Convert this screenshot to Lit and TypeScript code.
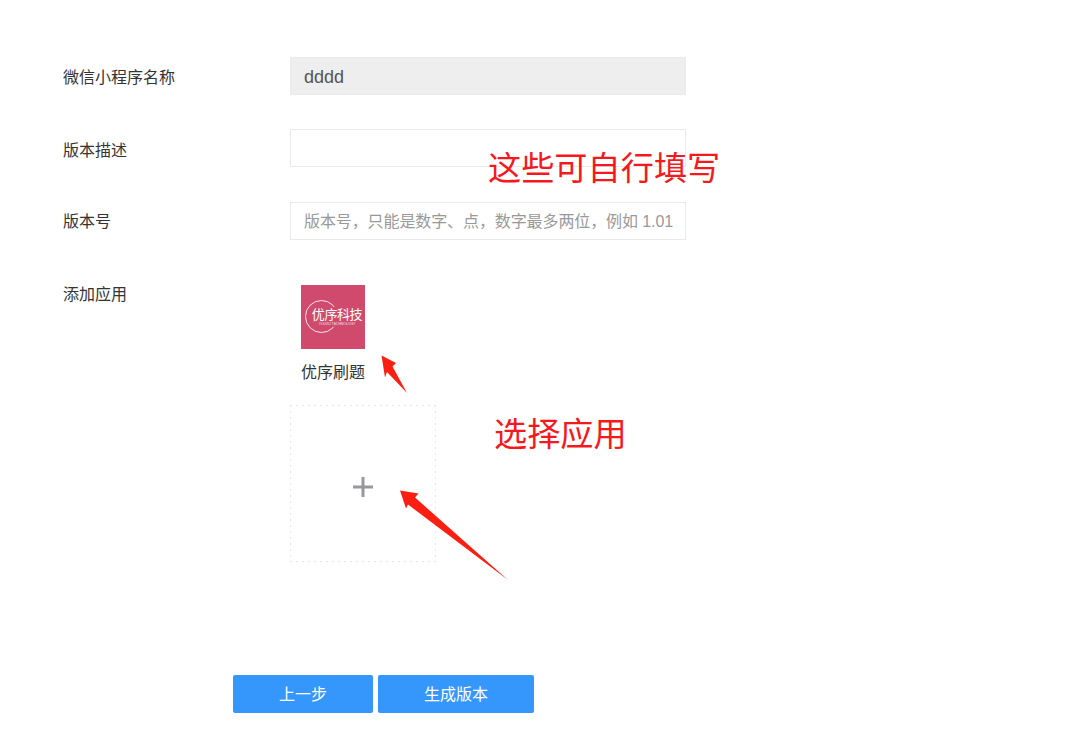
import { LitElement, html, css, svg } from "lit";
import { customElement } from "lit/decorators.js";

@customElement("app-root")
export class AppRoot extends LitElement {
  static styles = css`
    :host {
      display: block;
      position: relative;
      height: 731px;
      overflow: hidden;
      background: #fff;
      font-family: "Liberation Sans", "Noto Sans CJK SC", sans-serif;
      font-size: 16px;
      color: #333;
    }
    .form {
      display: flex;
      flex-direction: column;
      padding: 57px 0 0 63px;
    }
    .row {
      display: flex;
    }
    .row.r1 {
      margin-bottom: 34px;
    }
    .row.r2 {
      margin-bottom: 35px;
    }
    .row.r3 {
      margin-bottom: 36px;
    }
    .label {
      box-sizing: border-box;
      width: 227px;
      flex: none;
      line-height: 38px;
      height: 38px;
      color: #333;
    }
    .label.first {
      padding-top: 2px;
    }
    .label.low {
      padding-top: 3px;
    }
    .label.mid {
      padding-top: 1px;
    }
    .input {
      box-sizing: border-box;
      width: 396px;
      height: 38px;
      border: 1px solid #e9e9e9;
      padding: 2px 0 0 13px;
      font: inherit;
      color: #555;
      background: #fff;
      outline: none;
      border-radius: 0;
      margin: 0;
    }
    .input::placeholder {
      color: #999;
      opacity: 1;
      letter-spacing: -0.1px;
    }
    .input[disabled] {
      background: #eee;
      border-color: #eaeaea;
      -webkit-text-fill-color: #555;
      opacity: 1;
      font-size: 18px;
    }
    .apps {
      display: flex;
      flex-direction: column;
      width: 146px;
    }
    .app {
      display: flex;
      flex-direction: column;
      align-items: center;
      width: 86px;
      margin-top: 9px;
    }
    .logo {
      box-sizing: border-box;
      position: relative;
      width: 64px;
      height: 64px;
      padding-left: 8px;
      background: #cf4a6c;
      display: flex;
      flex-direction: column;
      align-items: center;
      justify-content: center;
      color: #fff;
    }
    .logo-ring {
      position: absolute;
      left: 4px;
      top: 15px;
      width: 33px;
      height: 33px;
      box-sizing: border-box;
      border: 1px solid rgba(255, 255, 255, 0.85);
      border-radius: 50%;
    }
    .logo-main {
      position: relative;
      background: #cf4a6c;
      font-size: 13px;
      font-weight: 400;
      line-height: 15px;
      white-space: nowrap;
      letter-spacing: -0.4px;
    }
    .logo-sub {
      position: relative;
      background: #cf4a6c;
      font-size: 3.4px;
      line-height: 5px;
      white-space: nowrap;
      opacity: 0.85;
    }
    .app-name {
      margin-top: 13px;
      line-height: 22px;
      color: #333;
      white-space: nowrap;
    }
    .add {
      box-sizing: border-box;
      width: 146px;
      height: 157px;
      margin-top: 21px;
      background-image:
        repeating-linear-gradient(90deg, #e6e6e6 0 2px, transparent 2px 6px),
        repeating-linear-gradient(90deg, #e6e6e6 0 2px, transparent 2px 6px),
        repeating-linear-gradient(180deg, #e6e6e6 0 2px, transparent 2px 6px),
        repeating-linear-gradient(180deg, #e6e6e6 0 2px, transparent 2px 6px);
      background-size: 100% 1px, 100% 1px, 1px 100%, 1px 100%;
      background-position: 0 0, 0 100%, 0 0, 100% 0;
      background-repeat: no-repeat;
      display: flex;
      align-items: center;
      justify-content: center;
    }
    .add svg {
      display: block;
      width: 22px;
      height: 22px;
      margin-top: 6px;
    }
    .actions {
      display: flex;
      gap: 5px;
      margin: 113px 0 0 170px;
    }
    .btn {
      box-sizing: border-box;
      height: 38px;
      border: 0;
      border-radius: 2px;
      background: #3596fb;
      color: #fff;
      font: inherit;
      padding: 0 0 2px;
      margin: 0;
    }
    .btn.prev {
      width: 140px;
    }
    .btn.make {
      width: 156px;
    }
    .note {
      position: absolute;
      font-size: 33.2px;
      line-height: 40px;
      color: #f5191e;
      white-space: nowrap;
    }
    .note.a {
      left: 488px;
      top: 149px;
    }
    .note.b {
      left: 494px;
      top: 415px;
    }
    .arrows {
      position: absolute;
      left: 0;
      top: 0;
      width: 1066px;
      height: 731px;
      pointer-events: none;
    }
    .arrows polygon {
      fill: #fb1f12;
    }
  `;

  render() {
    return html`
      <div class="form">
        <div class="row r1">
          <div class="label first">微信小程序名称</div>
          <input class="input" disabled value="dddd" />
        </div>
        <div class="row r2">
          <div class="label low">版本描述</div>
          <input class="input" />
        </div>
        <div class="row r3">
          <div class="label mid">版本号</div>
          <input class="input" placeholder="版本号，只能是数字、点，数字最多两位，例如 1.01" />
        </div>
        <div class="row">
          <div class="label">添加应用</div>
          <div class="apps">
            <div class="app">
              <div class="logo">
                <div class="logo-ring"></div>
                <div class="logo-main">优序科技</div>
                <div class="logo-sub">YOUXU TECHNOLOGY</div>
              </div>
              <div class="app-name">优序刷题</div>
            </div>
            <div class="add">
              <svg viewBox="0 0 22 22">
                <path d="M11 1V21M1 11H21" stroke="#98989c" stroke-width="3" fill="none"></path>
              </svg>
            </div>
          </div>
        </div>
        <div class="actions">
          <button class="btn prev">上一步</button>
          <button class="btn make">生成版本</button>
        </div>
      </div>
      <div class="note a">这些可自行填写</div>
      <div class="note b">选择应用</div>
      <svg class="arrows" viewBox="0 0 1066 731">
        ${svg`<polygon points="381.5,355.5 396,363 392.5,366.5 407,393 387,372 385,377.5"></polygon>
        <polygon points="400,490.5 418.5,493.5 415,497.5 508,580 408,504.5 406,508.5"></polygon>`}
      </svg>
    `;
  }
}
